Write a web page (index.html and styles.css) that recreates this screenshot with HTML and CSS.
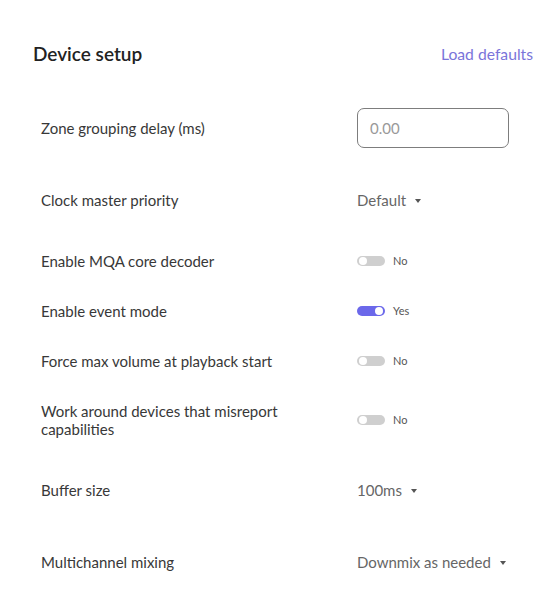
FILE: index.html
```html
<!DOCTYPE html>
<html>
<head>
<meta charset="utf-8">
<link rel="stylesheet" href="styles.css">
</head>
<body>
<div class="page">
  <div class="header">
    <h1 class="title">Device setup</h1>
    <a class="defaults">Load defaults</a>
  </div>
  <div class="rows">
    <div class="row">
      <div class="label">Zone grouping delay (ms)</div>
      <div class="control"><div class="input">0.00</div></div>
    </div>
    <div class="row">
      <div class="label">Clock master priority</div>
      <div class="control"><div class="select">Default<span class="caret"></span></div></div>
    </div>
    <div class="row">
      <div class="label">Enable MQA core decoder</div>
      <div class="control toggle-ctl"><span class="toggle"><span class="knob"></span></span><span class="tval">No</span></div>
    </div>
    <div class="row">
      <div class="label">Enable event mode</div>
      <div class="control toggle-ctl"><span class="toggle on"><span class="knob"></span></span><span class="tval">Yes</span></div>
    </div>
    <div class="row">
      <div class="label">Force max volume at playback start</div>
      <div class="control toggle-ctl"><span class="toggle"><span class="knob"></span></span><span class="tval">No</span></div>
    </div>
    <div class="row">
      <div class="label">Work around devices that misreport capabilities</div>
      <div class="control toggle-ctl"><span class="toggle"><span class="knob"></span></span><span class="tval">No</span></div>
    </div>
    <div class="row">
      <div class="label">Buffer size</div>
      <div class="control"><div class="select">100ms<span class="caret"></span></div></div>
    </div>
    <div class="row">
      <div class="label">Multichannel mixing</div>
      <div class="control"><div class="select">Downmix as needed<span class="caret"></span></div></div>
    </div>
  </div>
</div>
</body>
</html>
```
FILE: styles.css
```css
* { box-sizing: border-box; }
html, body { margin: 0; padding: 0; background: #fff; }
body { font-family: Lato, "Open Sans", sans-serif; color: #333; }
.page { padding: 40px 16px 0 33px; width: 549px; }
.header { display: flex; justify-content: space-between; align-items: center; height: 28px; }
.title { margin: 0; font-size: 19px; font-weight: 600; color: #222; line-height: 28px; }
.defaults { font-size: 15.7px; color: #7a74da; line-height: 28px; cursor: pointer; }
.rows { margin-top: 24px; padding-left: 8px; }
.row { display: flex; align-items: center; padding: 16px 0; }
.label { width: 270px; margin-right: 46px; font-size: 15px; line-height: 18px; color: #383838; }
.control { display: flex; align-items: center; min-height: 18px; }
.input { width: 152px; height: 40px; border: 1px solid #7d7d7d; border-radius: 7px; padding: 0 12px; display: flex; align-items: center; font-size: 15px; color: #999; }
.select { height: 40px; display: flex; align-items: center; font-size: 15px; color: #666; }
.caret { display: inline-block; width: 0; height: 0; margin-left: 9px; margin-top: 2px; border-left: 3.5px solid transparent; border-right: 3.5px solid transparent; border-top: 4px solid #555; }
.toggle { position: relative; display: inline-block; width: 28px; height: 10px; border-radius: 5px; background: #cfcfcf; }
.toggle .knob { position: absolute; top: 1px; left: 2px; width: 8px; height: 8px; border-radius: 50%; background: #fff; }
.toggle.on { background: #6b68ea; }
.toggle.on .knob { left: auto; right: 2px; }
.tval { margin-left: 8px; font-size: 11px; color: #555; line-height: 18px; }
```
